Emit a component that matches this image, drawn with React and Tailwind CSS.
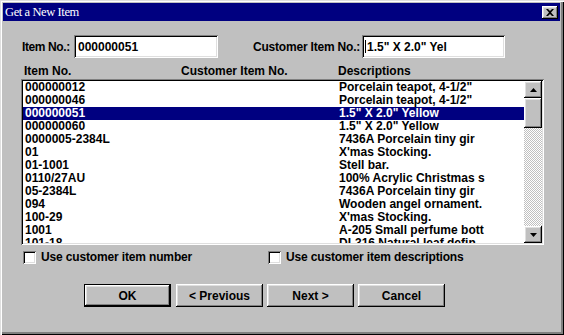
import React from "react";

const rows = [
  ["000000012", "", "Porcelain teapot, 4-1/2\""],
  ["000000046", "", "Porcelain teapot, 4-1/2\""],
  ["000000051", "", "1.5\" X 2.0\" Yellow"],
  ["000000060", "", "1.5\" X 2.0\" Yellow"],
  ["0000005-2384L", "", "7436A Porcelain tiny gir"],
  ["01", "", "X'mas Stocking."],
  ["01-1001", "", "Stell bar."],
  ["0110/27AU", "", "100% Acrylic Christmas s"],
  ["05-2384L", "", "7436A Porcelain tiny gir"],
  ["094", "", "Wooden angel ornament."],
  ["100-29", "", "X'mas Stocking."],
  ["1001", "", "A-205 Small perfume bott"],
  ["101-18", "", "DL316 Natural leaf defin"],
];

const raised =
  "shadow-[inset_-1px_-1px_0_#000,inset_1px_1px_0_#fff,inset_-2px_-2px_0_#808080,inset_2px_2px_0_#dfdfdf]";
const sunken =
  "shadow-[inset_1px_1px_0_#808080,inset_-1px_-1px_0_#fff,inset_2px_2px_0_#000,inset_-2px_-2px_0_#dfdfdf]";

function Checkbox({ label }) {
  return (
    <div className="flex items-center gap-[5px] whitespace-nowrap">
      <div className={`w-[13px] h-[13px] shrink-0 bg-white ${sunken}`} />
      <span className="leading-[15px] tracking-[-0.15px]">{label}</span>
    </div>
  );
}

function Button({ children, def }) {
  if (def) {
    return (
      <div className="w-[87px] h-[23px] border border-black flex">
        <div className={`flex-1 flex items-center justify-center ${raised}`}>{children}</div>
      </div>
    );
  }
  return (
    <div className={`w-[87px] h-[23px] flex items-center justify-center ${raised}`}>{children}</div>
  );
}

function Arrow({ up }) {
  return (
    <svg width="7" height="4" viewBox="0 0 7 4">
      {up ? <polygon points="3.5,0 7,4 0,4" fill="#000" /> : <polygon points="0,0 7,0 3.5,4" fill="#000" />}
    </svg>
  );
}

export default function App() {
  return (
    <div
      className="w-[564px] h-[335px] bg-[#c0c0c0] flex flex-col pl-[3px] pt-[3px] pr-[4px] pb-[4px] shadow-[inset_1px_1px_0_#dfdfdf,inset_2px_2px_0_#fff,inset_-1px_-1px_0_#000,inset_-3px_-3px_0_#808080] text-[12px] font-bold text-black"
      style={{ fontFamily: '"Liberation Sans", Arial, sans-serif' }}
    >
      <div className="h-[18px] bg-[#000080] flex items-center justify-between pl-[2px] pr-[2px]">
        <span className="text-white font-normal text-[12.5px] leading-none tracking-[-0.4px]" style={{ fontFamily: '"Liberation Serif", serif' }}>
          Get a New Item
        </span>
        <div className={`w-[16px] h-[13px] bg-[#c0c0c0] flex items-center justify-center ${raised}`}>
          <svg width="8" height="7" viewBox="0 0 8 7">
            <path d="M0 0 L2 0 L4 2 L6 0 L8 0 L5 3.5 L8 7 L6 7 L4 5 L2 7 L0 7 L3 3.5 Z" fill="#000" />
          </svg>
        </div>
      </div>

      <div className="flex flex-col pl-[18px] pt-[14px]">
        <div className="flex items-center h-[23px] whitespace-nowrap">
          <span className="ml-[1px] w-[52px] shrink-0 tracking-[-0.4px]">Item No.:</span>
          <div className={`w-[144px] shrink-0 h-[23px] bg-white flex items-center pl-[4px] ${sunken}`}>000000051</div>
          <span className="ml-[35px] w-[109px] shrink-0 tracking-[-0.2px]">Customer Item No.:</span>
          <div className={`w-[143px] shrink-0 h-[23px] bg-white flex items-center pl-[3px] ${sunken}`}>
            <span className="w-px h-[13px] bg-black mr-px" />
            1.5" X 2.0" Yel
          </div>
        </div>

        <div className="grid grid-cols-[157px_157px_1fr] pl-[3px] mt-[7px] h-[13px] leading-[13px]">
          <span>Item No.</span>
          <span>Customer Item No.</span>
          <span>Descriptions</span>
        </div>

        <div className={`mt-[1px] w-[523px] h-[166px] bg-white p-[2px] flex ${sunken}`}>
          <div className="flex-1 overflow-hidden">
            {rows.map((r, i) => (
              <div
                key={i}
                className={`grid grid-cols-[157px_157px_1fr] pl-[2px] h-[13px] leading-[13px] whitespace-nowrap ${
                  i === 2 ? "bg-[#000080] text-white" : ""
                }`}
              >
                <span>{r[0]}</span>
                <span>{r[1]}</span>
                <span>{r[2]}</span>
              </div>
            ))}
          </div>
          <div className="w-[18px] flex flex-col">
            <div className={`h-[17px] bg-[#c0c0c0] flex items-center justify-center ${raised}`}>
              <Arrow up />
            </div>
            <div className={`h-[30px] bg-[#c0c0c0] ${raised}`} />
            <div className="flex-1 bg-[repeating-conic-gradient(#fff_0_25%,#c0c0c0_0_50%)] bg-[length:2px_2px]" />
            <div className={`h-[17px] bg-[#c0c0c0] flex items-center justify-center ${raised}`}>
              <Arrow />
            </div>
          </div>
        </div>

        <div className="flex items-center mt-[5px] h-[15px]">
          <div className="w-[245px] ml-[2px] shrink-0">
            <Checkbox label="Use customer item number" />
          </div>
          <Checkbox label="Use customer item descriptions" />
        </div>

        <div className="flex items-center mt-[19px] ml-[63px] gap-[4px]">
          <div className="mr-[1px]">
            <Button def>OK</Button>
          </div>
          <Button>&lt; Previous</Button>
          <Button>Next &gt;</Button>
          <Button>Cancel</Button>
        </div>
      </div>
    </div>
  );
}
